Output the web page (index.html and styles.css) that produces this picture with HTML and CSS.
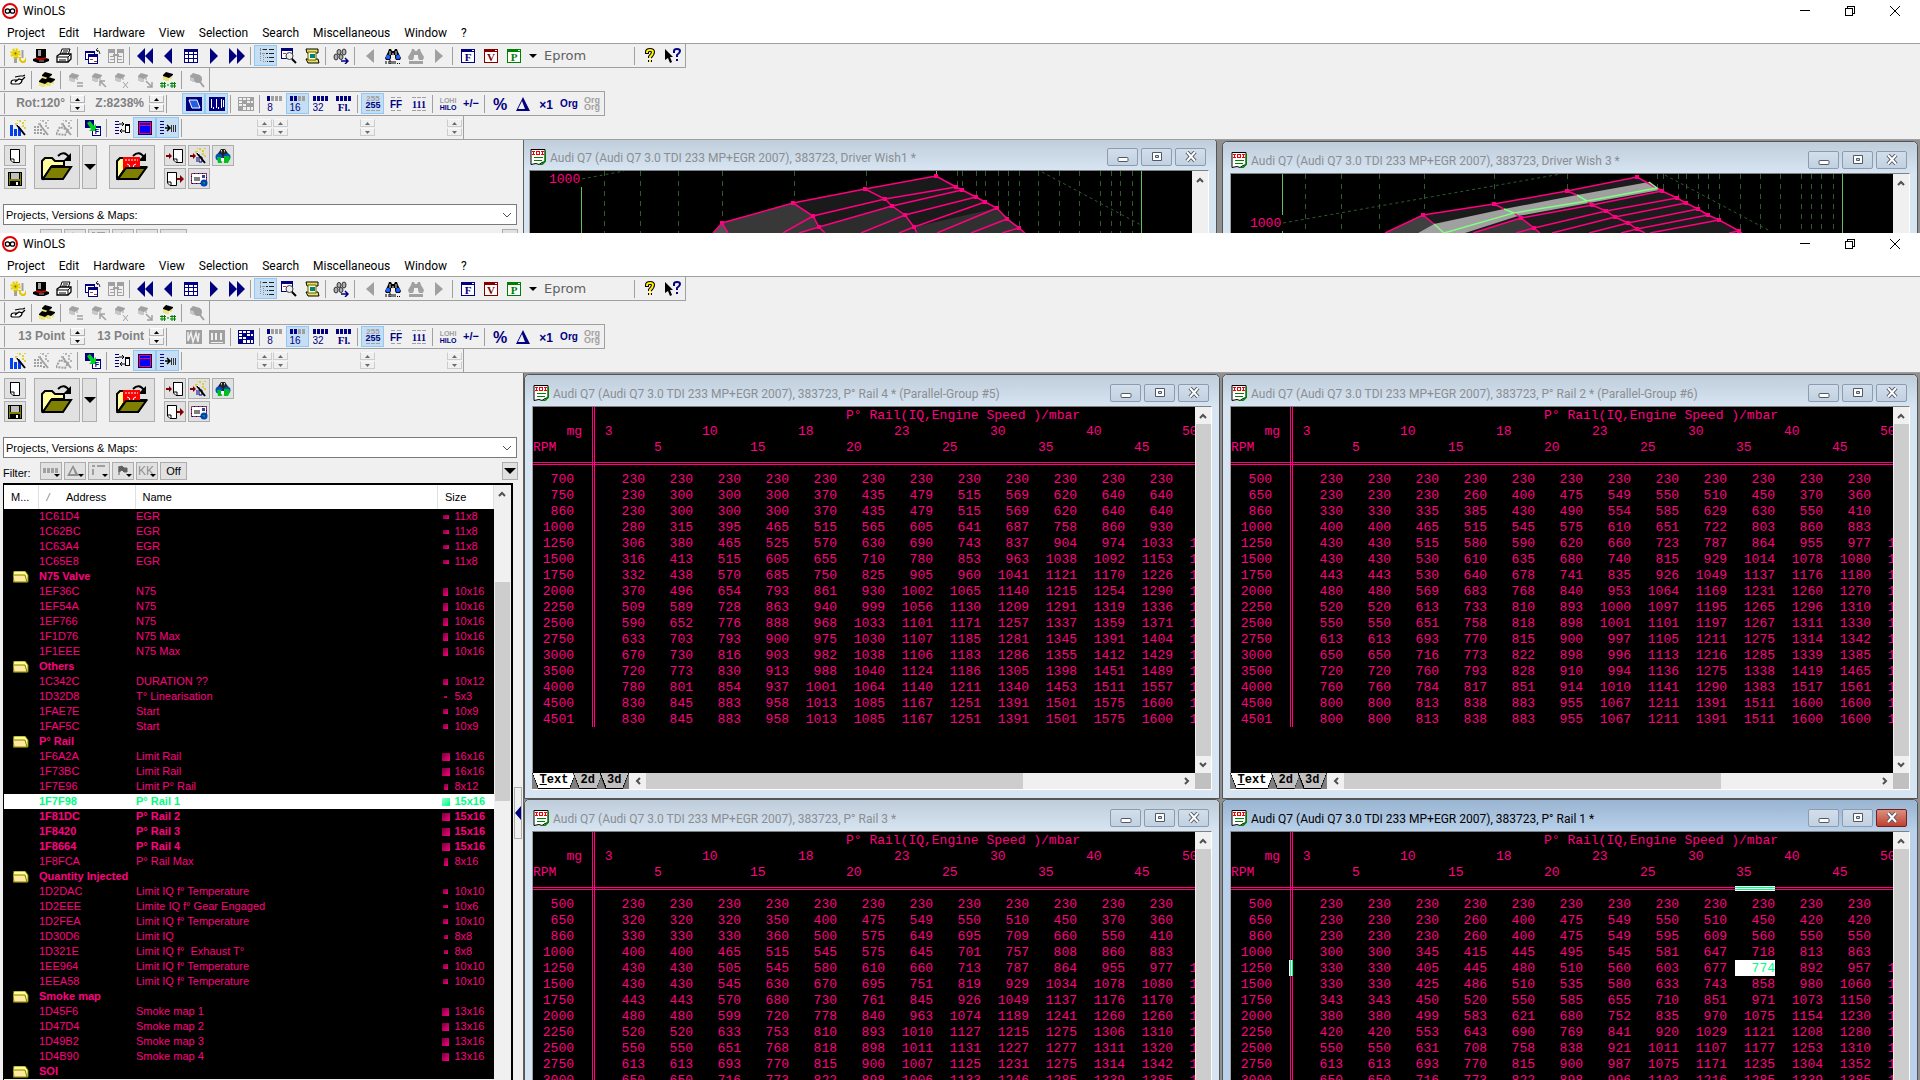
FILE: index.html
```html
<!DOCTYPE html>
<html lang="en">
<head>
<meta charset="utf-8">
<title>WinOLS</title>
<link rel="stylesheet" href="styles.css">
</head>
<body>
<main class="desktop">
  <section class="app app-back" data-app="back">
    <div class="chrome"></div>
    <div class="workspace">
      <aside class="side"></aside>
      <div class="splitter"></div>
      <div class="mdi"></div>
    </div>
  </section>
  <section class="app app-front" data-app="front">
    <div class="chrome"></div>
    <div class="workspace">
      <aside class="side"></aside>
      <div class="splitter"><button class="collapse" aria-label="Collapse"><svg width="6" height="14" viewBox="0 0 6 14"><path d="M6 0v14L0 7z" fill="#000080"/></svg></button></div>
      <div class="mdi"></div>
    </div>
  </section>
</main>
<script src="icons.js"></script>
<script src="app.js"></script>
</body>
</html>
```
FILE: styles.css
```css
* { box-sizing: border-box; }
body { margin: 0; background: #f0f0f0; color: #000; font-family: Roboto, "Noto Sans", sans-serif; font-size: 12px; }
button { margin: 0; padding: 0; border: 0; background: none; font: inherit; color: inherit; display: flex; align-items: center; justify-content: center; }
svg { display: block; flex: none; }
.desktop { height: 100vh; overflow: hidden; display: flex; flex-direction: column; }
.app { display: flex; flex-direction: column; overflow: hidden; background: #f0f0f0; }
.app-back { flex: 0 0 233px; }
.app-front { flex: 1; min-height: 0; }

/* title bar and menu */
.titlebar { display: flex; align-items: center; height: 22px; padding: 0 3px 0 2px; gap: 5px; background: #fff; }
.titlebar .name { flex: 1; }
.titlebar .controls { display: flex; }
.titlebar .controls button { width: 45px; height: 20px; }
.menu { display: flex; height: 21px; background: #fff; }
.menu button { padding: 0 7px; }

/* toolbars */
.bars { border-top: 1px solid #a0a0a0; border-bottom: 1px solid #a0a0a0; }
.bar { display: flex; align-items: center; width: fit-content; padding: 1px; border-right: 1px solid #a0a0a0; }
.bar.low { border-bottom: 1px solid #a0a0a0; }
.bar.high { border-top: 1px solid #a0a0a0; }
.grip { width: 4px; height: 21px; border-right: 1px solid #a0a0a0; margin-right: 1px; }
.tool { width: 23px; height: 21px; }
.tool.on { background: #c5def4; border: 1px solid #90c8f6; }
.tool.off svg { filter: brightness(0) invert(63%); }
.tool.slim { width: 15px; }
.sep { width: 1px; height: 18px; margin: 0 3px 0 2px; background: #a0a0a0; }
.sep.wide { margin-right: 15px; }
.readout { width: 59px; text-align: right; font: bold 12px/21px "Liberation Sans", Arial, sans-serif; color: #808080; }
.spin { display: flex; flex-direction: column; gap: 1px; margin-left: 5px; }
.spin button { width: 15px; height: 8px; border: 1px solid #b0b0b0; border-top-color: #fff; }
.spin.dim { margin-left: 1px; opacity: .55; }
.gap { width: 71px; }
.eprom { width: 92px; padding-left: 4px; font: 13px/21px "DejaVu Sans", sans-serif; color: #606060; }

/* side panel */
.workspace { flex: 1; min-height: 0; display: flex; }
.side { flex: 0 0 514px; display: flex; flex-direction: column; padding-top: 5px; font-family: "Liberation Sans", Arial, sans-serif; font-size: 11px; min-height: 0; }
.files { display: flex; padding-left: 4px; gap: 2px; }
.files button, .filter button { background: #e1e1e1; border: 1px solid #adadad; }
.stack { display: grid; grid-auto-rows: 21px; grid-template-columns: repeat(3, 22px); gap: 2px; margin-left: 7px; }
.stack.single { grid-template-columns: 22px; margin: 0 6px 0 0; }
.big { width: 46px; }
.files .drop { width: 15px; margin-right: 10px; }
.combo { position: relative; margin: 15px -3px 0 3px; }
.combo select { display: block; width: 100%; height: 21px; padding: 0 2px; appearance: none; border: 1px solid #7a7a7a; border-radius: 0; background: #fff; color: #000; font: 11px "Liberation Sans", Arial, sans-serif; }
.combo svg { position: absolute; right: 5px; top: 8px; pointer-events: none; }
.filter { display: flex; align-items: center; gap: 2px; margin: 4px -4px 0 3px; }
.filter .cap { width: 35px; padding-top: 4px; }
.filter button { width: 22px; height: 18px; }
.filter .off { width: 27px; }
.filter .more { width: 16px; margin-left: auto; }
.list { display: flex; margin: 3px 1px 0 3px; flex: 1; min-height: 0; overflow: hidden; border: 1px solid #000; border-width: 2px 2px 0 1px; }
.maps { width: 490px; flex: none; height: fit-content; }
.maps table { width: 490px; table-layout: fixed; border-collapse: collapse; background: #000; color: #ff0080; }
.maps th { height: 24px; padding: 0 0 0 7px; background: #fff; color: #000; font-weight: normal; text-align: left; border-right: 1px solid #e0e0e0; }
.maps td { height: 15px; padding: 0 0 0 1px; line-height: 15px; white-space: nowrap; }
.maps .mark { width: 34px; }
.maps .addr { width: 97px; }
.maps .size { width: 56px; }
.maps i { margin: 0 14px 0 1px; color: #808080; }
.maps .bold td { font-weight: bold; }
.maps .picked td { background: #fff; color: #00ff80; }
.maps td svg { margin-left: 8px; }
.dims { display: flex; align-items: center; gap: 4px; padding-left: 2px; }
.swatch { flex: 0 0 10px; display: flex; justify-content: center; }
.swatch b { background: linear-gradient(135deg, #700038, #ff0080); }
.picked .swatch b { background: linear-gradient(135deg, #90ffd0, #00ff80); }
.vscroll { width: 16px; flex: none; background: #f0f0f0; display: flex; flex-direction: column; align-items: center; }
.vscroll button { width: 16px; height: 17px; }
.vscroll .thumb { width: 15px; background: #cdcdcd; flex: 1; }
.list .thumb { flex: 0 0 219px; margin-top: 80px; }
.splitter { flex: 0 0 9px; }
.collapse { width: 8px; height: 52px; margin-top: 414px; border: 1px solid #adadad; }

/* document windows */
.mdi { flex: 1; min-width: 0; overflow: hidden; display: grid; grid-template-columns: 1fr 1fr; column-gap: 2px; align-content: start; padding: 1px 2px 0 0; border-left: 1px solid #606060; background: #909090; }
.win { min-width: 0; border: 1px solid #555; border-radius: 5px 5px 0 0; padding: 0 7px 8px; background: #d7e4f2; }
.win header { display: flex; align-items: center; height: 31px; margin: 0 -7px; padding: 4px 10px 0 8px; gap: 4px; color: #8a8e92; background: linear-gradient(#bfcddb, #d7e4f2); border-radius: 5px 5px 0 0; white-space: nowrap; }
.win h2 { flex: 1; margin: 0; padding-top: 2px; font-size: 12px; font-weight: normal; }
.win.active { background: #b9d1ea; }
.win.active header { color: #000; background: linear-gradient(#99b4d1, #b9d1ea); }
.win header button { width: 31px; height: 18px; margin-left: -1px; border: 1px solid #8c9cb0; border-radius: 2px; background: linear-gradient(#d2deea, #c2d0e0); }
.win.active header .close { background: linear-gradient(#dc9080, #c04030); border-color: #702020; }
.pane { display: flex; border: 1px solid #a0a0a0; border-color: #808080 #fff #fff #a0a0a0; border-bottom: 0; background: #000; }
.view { flex: 1; min-width: 0; min-height: 366px; overflow: hidden; background: #000; }
.app-back .view { min-height: 120px; }
.app-back .win:first-child { margin: -3px 3px 0 -3px; }
.sheet { width: 688px; table-layout: fixed; border-collapse: separate; border-spacing: 0; color: #ff0080; font: 13px/14px "Liberation Mono", "Courier New", monospace; }
.sheet td, .sheet th { height: 16px; padding: 2px 0 0; font-weight: normal; text-align: right; white-space: nowrap; }
.sheet .head { text-align: left; padding-left: 9px; }
.sheet .key { border-right: 3px double #ff0080; padding-right: 18px; }
.sheet .unit { padding-right: 10px; }
.sheet .left { text-align: left; }
.sheet .rules td, .sheet .rules .key { padding: 0; }
.sheet .c0 { width: 62px; }
.sheet .c1 { width: 50px; }
.rule { height: 3px; border-top: 1px solid #ff0080; border-bottom: 1px solid #ff0080; }
.key .rule { margin-right: -3px; }
.rule-hit { position: relative; top: -2px; height: 5px; margin-left: 8px; border: 1px solid #fff; border-width: 1px 0; background: linear-gradient(#00ff80 1px, #fff 1px 2px, #00ff80 2px); }
.sheet .key.hit { border-right-color: #00ff80; background: linear-gradient(to left, #fff 4px, transparent 4px) border-box; }
.hitcell { display: block; margin: -2px 0 0 8px; padding-top: 2px; background: #fff; color: #00ff80; }
.tabs { display: flex; height: 17px; border: 1px solid #fff; border-width: 0 1px 1px 0; background: #f0f0f0; }
.tabs .tabset { display: flex; background: #808080; width: 97px; }
.tabs .tabset button { position: relative; flex: 1; margin-left: -3px; height: 16px; clip-path: polygon(0 0, 100% 0, calc(100% - 6px) 100%, 6px 100%); background: #c0c0c0; font: bold 12px/15px "Liberation Mono", monospace; border-bottom: 1px solid #000; }
.tabs .tabset button::before, .tabs .tabset button::after { content: ""; position: absolute; top: 0; bottom: 0; width: 6px; background: linear-gradient(to top right, #000 55%, transparent 56%); left: 0; }
.tabs .tabset button::after { left: auto; right: 0; background: linear-gradient(to top left, #000 55%, transparent 56%); }
.tabs .tabset button:first-child { flex: 0 0 44px; margin: 0; background: #fff; }
.tabs .arrow { width: 17px; }
.tabs .bar-thumb { flex: 0 0 377px; background: #cdcdcd; }
.tabs .arrow.end { margin-left: auto; }
.tabs .corner { width: 16px; background: #c0c0c0; }
```
FILE: icons.js
```js
const N = '#000080';
const svg = (w, h, body) => `<svg width="${w}" height="${h}" viewBox="0 0 ${w} ${h}">${body}</svg>`;
const crisp = s => `<g shape-rendering="crispEdges">${s}</g>`;
const label = (t, x, y, size, color = N, font = 'Liberation Sans', weight = 'bold') =>
  `<text x="${x}" y="${y}" font-family="${font}" font-size="${size}" font-weight="${weight}" text-anchor="middle" fill="${color}">${t}</text>`;
const chip = (x, y) => `<path d="M${x + 1} ${y + 4}v4M${x + 3} ${y + 5}v4M${x + 5} ${y + 5}v4M${x + 8} ${y + 3}v4" stroke="#e8d800"/><path d="M${x} ${y + 3}l3-3 7 2 0 1-4 3-6-2z" fill="#000"/>`;
const bits = n => crisp([0, 1, 2, 3].map(i => `<path d="M${i * 4} 0h3v5h-3z" fill="${i < n ? N : '#a0a0a0'}"/>`).join(''));
const wand = `<path d="M7 5l8 10" stroke="#000" stroke-width="2"/><path d="M5 4h3M9 1h2M12 3h2M14 0h2M12 6h2M14 8h2M7 0h1" stroke="#d8c800" stroke-width="1.5"/><path d="M7 4l2 2" stroke="#fff"/>`;
const bino = c => `<path d="M0 10l3-6 1-3h2l1 2h2l1-2h2l1 3 3 6-1 2h-4l-1-2V7H6v3l-1 2H1z" fill="#000"/><circle cx="3" cy="9" r="2.200" fill="${c}"/><circle cx="13" cy="9" r="2.200" fill="${c}"/><path d="M5 3v4M11 3v4M8 5v3" stroke="#e0e0e0" fill="none"/>`;
const windowLetter = (l, c) => crisp(`<path d="M1.500 1.500h13v13h-13z" fill="#fff" stroke="${c}"/><path d="M1 1h14v3H1z" fill="${c}"/><path d="M12 2h2v1h-2z" fill="#fff"/>`) + label(l, 8, 13, 11, c, 'Liberation Serif');
const folder = `<path d="M1 26V9l3-3h7l3 3h9v5H11L2 27z" fill="#ffffa0" stroke="#000" stroke-width="2"/><path d="M2 27l8-12h20l-8 12z" fill="#808000" stroke="#000" stroke-width="2"/><path d="M17 4q6-6 11 1" fill="none" stroke="#000" stroke-width="2"/><path d="M30 1v8h-8z" fill="#000"/>`;
const page = '<path d="M3 1.500h9.500v13H6L3.500 12V1.500z" fill="#fff" stroke="#000"/><path d="M3 11h4v4" fill="none" stroke="#000"/>';
const I = {
  logo: svg(16, 16, '<circle cx="8" cy="8" r="7" fill="#fff" stroke="#e00000" stroke-width="2"/><circle cx="5.500" cy="8" r="2.200" fill="none" stroke="#000" stroke-width="1.300"/><circle cx="10.500" cy="8" r="2.200" fill="none" stroke="#000" stroke-width="1.300"/>'),
  doc: svg(16, 16, '<path d="M1 .5h14v12l-3 1-3 2-3-1-5 1z" fill="#fff" stroke="#000"/><path d="M15.500 2v10l-3 3-4 1" fill="none" stroke="#008000" stroke-width="1.500"/><path d="M4 8.500h9M4 11.500h8" stroke="#008000"/>' + crisp('<path d="M2 2h3v1h-1v2h1v1h-3v-1h1v-2h-1zM6 2h4v4h-4zM11 2h3v1h-1v2h1v1h-3v-1h1v-2h-1z" fill="#f00000"/><path d="M7 3h2v2h-2z" fill="#fff"/>')),
  gear: svg(16, 16, '<path d="M4 9h3v6H4z" fill="#a0a0a0"/><circle cx="5.500" cy="5.500" r="4" fill="none" stroke="#e8d000" stroke-width="2.500" stroke-dasharray="2 1.100"/><circle cx="5.500" cy="5.500" r="3" fill="#e8d000"/><circle cx="5.500" cy="5.500" r="1" fill="#706000"/><path d="M12.500 2v8" stroke="#a0a0a0" stroke-width="2"/><path d="M10 9v3l2 2h2l2-2v-2" fill="none" stroke="#e0c800" stroke-width="2"/>'),
  hat: svg(16, 16, '<path d="M3 1h10v9l3 1v2l-5 2H5l-5-2v-2l3-1z" fill="#000"/><path d="M5 2h3v6H5z" fill="#a0a0a0"/><path d="M3 9q5 2 10 0v2q-5 2-10 0z" fill="#c00000"/><path d="M6 13h5" stroke="#a0a0a0"/>'),
  print: svg(16, 16, '<path d="M4 7l2-6h8l-2 6z" fill="#fff" stroke="#000"/><path d="M1 8l3-2h11v5l-3 3H1z" fill="#fff" stroke="#000" stroke-width="1.300"/><path d="M1 9h11l3-3M3 12h7M7 3h5M6 5h5M12 9v5" stroke="#000" fill="none"/>'),
  wins: svg(16, 16, crisp(`<path d="M.5 3.500h9v8h-9z" fill="#fff" stroke="${N}"/><path d="M0 3h10v2H0z" fill="${N}"/><path d="M3.500 6.500h9v9h-9z" fill="#fff" stroke="${N}"/><path d="M3 6h10v3H3z" fill="${N}"/><path d="M5 11h3v1H5zM9 13h3v1H9z" fill="#a04040"/>`) + '<path d="M11 2q4 0 4 4M11 2l2-2M11 2l2 2" stroke="#303030" fill="none"/>'),
  split: svg(16, 16, crisp('<path d="M.5 2.500h6v12h-6zM9.500 2.500h6v12h-6z" fill="none" stroke="#a0a0a0"/><path d="M0 1h7v4H0zM9 1h7v4H9zM2 8h4v1H2zM2 11h4v1H2zM10 8h4v1h-4zM10 11h4v1h-4zM5 6h6v2H5z" fill="#a0a0a0"/>')),
  rew: svg(16, 16, `<path d="M8 0v16L0 8zM16 0v16L8 8z" fill="${N}"/>`),
  prev: svg(16, 16, `<path d="M12 0v16L4 8z" fill="${N}"/>`),
  next: svg(16, 16, `<path d="M4 0v16l8-8z" fill="${N}"/>`),
  fwd: svg(16, 16, `<path d="M0 0v16l8-8zM8 0v16l8-8z" fill="${N}"/>`),
  grid: svg(16, 16, crisp(`<path d="M1 1h14v14H1z" fill="${N}"/><path d="M2 4h3v2H2zM6 4h4v2H6zM11 4h3v2h-3zM2 7h3v3H2zM6 7h4v3H6zM11 7h3v3h-3zM2 11h3v3H2zM6 11h4v3H6zM11 11h3v3h-3z" fill="#fff"/>`)),
  tree: svg(16, 16, crisp('<path d="M2 0v13M2 5h5M5 5v10M5 9h3M5 13h3M2 1h3" stroke="#909090" stroke-dasharray="1 1"/><path d="M5 1h4v1H5zM11 1h5v1h-5zM8 5h2v1H8zM11 5h5v1h-5zM9 9h1v1H9zM11 9h5v1h-5zM9 13h1v1H9zM11 13h5v1h-5z" fill="#202020"/>')),
  find: svg(16, 16, crisp(`<path d="M.5.5h11v10h-11z" fill="#fff" stroke="${N}"/><path d="M0 0h12v3H0z" fill="${N}"/><path d="M2 5h3v1H2z" fill="#b04040"/>`) + '<circle cx="8.500" cy="8" r="3.500" fill="#eee" stroke="#404040"/><path d="M11 11l4 4" stroke="#000" stroke-width="2"/>'),
  scroll: svg(16, 16, '<path d="M2 1h12v4H3zM2 11h12l1 4H4z" fill="#e8e060" stroke="#000"/><path d="M4 4h8v8H4z" fill="#ffffc0" stroke="#606000"/><path d="M6 6h5v4H6z" fill="#008080"/>'),
  chain: svg(16, 16, `<g fill="#b0b0b0" stroke="#303030"><ellipse cx="3" cy="9" rx="2" ry="3"/><ellipse cx="6" cy="4" rx="2" ry="2.500"/><ellipse cx="8" cy="9" rx="2" ry="2.500"/><ellipse cx="11" cy="4" rx="2" ry="3"/></g><path d="M8 13h7M12 10l3 3-3 3" stroke="${N}" fill="none" stroke-width="1.500"/>`),
  prevg: svg(16, 16, '<path d="M12 1v14L4 8z" fill="#a0a0a0"/>'),
  nextg: svg(16, 16, '<path d="M4 1v14l8-7z" fill="#a0a0a0"/>'),
  bino: svg(16, 16, bino('#2060ff') + '<path d="M1 13v3M4 13h2v3H4zM8 13v3M10 13v3M12 15.500h1M14 15.500h1" stroke="#000" fill="none"/>'),
  bino2: svg(16, 16, '<path d="M0 9l3-5 1-3h2l1 2h2l1-2h2l1 3 3 5-1 3h-4l-1-3V7H6v2l-1 3H1z"/><path d="M1 13h14v3H1z"/>'),
  F: svg(16, 16, windowLetter('F', N)),
  V: svg(16, 16, windowLetter('V', '#800000')),
  P: svg(16, 16, windowLetter('P', '#008000')),
  caret: svg(8, 4, '<path d="M0 0h8L4 4z"/>'),
  caretBig: svg(12, 6, '<path d="M0 0h12L6 6z"/>'),
  help: svg(16, 16, '<path d="M5 6V4q0-2 3-2t3 2q0 2-3 5v1M8 12v2" fill="none" stroke="#000" stroke-width="4"/><path d="M5 5V4q0-2 3-2t3 2q0 2-3 5v1M8 12v2" fill="none" stroke="#ffee00" stroke-width="2"/>'),
  what: svg(16, 16, `<path d="M0 1l8 8H5l2 5-2 1-2-5-3 2z"/><path d="M9 5V3q0-2 3-2t3 2q0 2-3 4v2M12 11v2" fill="none" stroke="${N}" stroke-width="2"/>`),
  hand: svg(16, 16, '<path d="M5 5l5-1 3 0 2-1M1 11q0-3 3-3l3 0-2 2 4-3 3 1q0 3-3 4H3q-2 0-2-1zM12 8l3-3" fill="#fff" stroke="#000" stroke-width="1.200"/>'),
  chips: svg(16, 16, chip(3, 0) + chip(6, 5) + chip(0, 6)),
  chipEq: svg(16, 16, chip(1, 1) + '<path d="M9 11h6M9 14h6" stroke="#000" stroke-width="1.500"/>'),
  chipUp: svg(16, 16, chip(1, 1) + '<path d="M15 15L9 9M9 14V9h5" stroke="#000" stroke-width="1.500" fill="none"/>'),
  chipX: svg(16, 16, chip(1, 1) + '<path d="M9 10l5 6M14 10l-5 6" stroke="#000"/>'),
  chipDn: svg(16, 16, chip(1, 1) + '<path d="M9 9l6 6M15 10v5h-5" stroke="#000" stroke-width="1.500" fill="none"/>'),
  chipHash: svg(16, 16, chip(3, 0) + '<path d="M0 11.500h6M0 14h6M2 10v6M4.500 10v6M7 13h2M10 11.500h6M10 14h6M12 10v6M14.500 10v6" stroke="#008000"/>'),
  chipFind: svg(16, 16, chip(1, 1) + '<circle cx="9" cy="7" r="4"/><path d="M11 10l4 5" stroke="#000" stroke-width="2"/>'),
  v2: svg(16, 16, crisp(`<path d="M0 1h16v14H0z" fill="${N}"/>`) + '<path d="M3 4h8l3 8H6z" fill="#2060e0" stroke="#fff"/>'),
  v3: svg(16, 16, crisp(`<path d="M0 1h16v14H0z" fill="${N}"/><path d="M2.500 3v9M4.500 11v2M7.500 3v9M9.500 11v2M12.500 3v9M14.500 4v7" stroke="#fff"/>`)),
  v2g: svg(16, 16, crisp('<path d="M0 1h16v14H0z" fill="#a0a0a0"/>') + '<path d="M2 3v9l3-8 2 9 3-9 2 9 1-9" fill="none" stroke="#f0f0f0" stroke-width="1.500"/>'),
  v3g: svg(16, 16, crisp('<path d="M0 1h16v14H0z" fill="#a0a0a0"/><path d="M2 4h2v7H2zM6 4h2v7H6zM11 4h2v7h-2zM2 13h12v1H2z" fill="#f0f0f0"/>')),
  b8: svg(16, 16, bits(1) + label('8', 3, 15, 10, N, 'Liberation Sans', 'normal')), b16: svg(16, 16, bits(2) + label('16', 5, 15, 10, N, 'Liberation Sans', 'normal')),
  b32: svg(16, 16, bits(4) + label('32', 5, 15, 10, N, 'Liberation Sans', 'normal')), bfl: svg(16, 16, bits(4) + label('Fl.', 8, 15, 11, N, 'Liberation Serif')),
  n255: svg(16, 16, label('255', 8, 5, 8, '#a0a0a0') + label('255', 8, 12, 9) + crisp('<path d="M1 14h4M6 14h4M11 14h4" stroke="#a0a0a0"/>')),
  nff: svg(16, 16, crisp('<path d="M3 1.500h4M9 1.500h4M3 14.500h4M9 14.500h4" stroke="#a0a0a0"/>') + label('FF', 8, 12, 10)),
  n111: svg(16, 16, crisp('<path d="M1 1.500h4M6 1.500h4M11 1.500h4M1 14.500h4M6 14.500h4M11 14.500h4" stroke="#a0a0a0"/>') + label('111', 8, 12, 10, N, 'Liberation Serif')),
  hilo: svg(18, 16, label('LOHI', 9, 7, 7, '#a0a0a0') + label('HILO', 9, 14, 7)),
  pm: svg(16, 16, label('+/−', 8, 11, 11)),
  pct: svg(16, 16, label('%', 8, 14, 16)),
  delta: svg(16, 16, `<path d="M8 1l7 14H1zM7 5l-4 8h7z" fill="${N}" fill-rule="evenodd"/>`),
  x1: svg(16, 16, label('×1', 8, 13, 12)),
  org: svg(18, 16, label('Org', 9, 11, 10)),
  orgorg: svg(18, 18, label('Org', 9, 8, 9, '#a0a0a0') + label('Org', 9, 15, 9, '#a0a0a0')),
  grid3: svg(16, 16, crisp(`<path d="M0 1h16v14H0z" fill="${N}"/><path d="M1 2h3v2H1zM5 2h3v2H5zM9 2h3v2H9zM1 5h3v2H1zM9 5h3v2H9zM13 5h2v2h-2zM1 8h3v2H1zM5 8h3v2H5zM5 11h3v3H5zM9 11h3v3H9zM13 11h2v3h-2z" fill="#fff"/>`)),
  grid3g: svg(16, 16, crisp('<path d="M0 1h16v14H0z" fill="#a0a0a0"/><path d="M1 2h3v2H1zM5 2h3v2H5zM9 2h3v2H9zM1 5h3v2H1zM9 5h3v2H9zM13 5h2v2h-2zM1 8h3v2H1zM5 8h3v2H5zM5 11h3v3H5zM9 11h3v3H9zM13 11h2v3h-2z" fill="#f0f0f0"/>')),
  wbars: svg(16, 16, crisp('<path d="M0 5h3v11H0zM4 9h3v7H4zM8 8h3v8H8z" fill="#0040f0"/>') + wand),
  wgrid: svg(16, 16, crisp('<path d="M1 6h2v2H1zM4 6h2v2H4zM1 9h2v2H1zM4 9h2v2H4zM7 9h2v2H7zM1 12h2v2H1zM4 12h2v2H4zM7 12h2v2H7zM10 13h2v2h-2z"/>') + wand),
  wplane: svg(16, 16, '<path d="M0 14l4-7 8 3-3 5z" fill="none" stroke="#000" stroke-width="2" stroke-dasharray="2 1"/>' + wand),
  conv: svg(16, 16, crisp(`<path d="M0 0h9v8H0z" fill="${N}"/><path d="M7.500 6.500h8v9h-8z" fill="#fff" stroke="${N}"/><path d="M7 6h9v2H7z" fill="${N}"/>`) + '<path d="M2 3l3-2 4 5 2-2v7H4l2-2z" fill="#00d020"/>' + label('F', 12, 14, 7)),
  sync: svg(16, 16, crisp(`<path d="M1 1.500h4M1 4.500h4M1 7.500h4M1 10.500h4M1 13.500h4" stroke="${N}"/><path d="M11.500 4.500h4v8h-4z" fill="#fff" stroke="#000"/><path d="M11 4h5v2h-5z"/>`) + '<path d="M5 4h5M8 2l2 2-2 2M11 11H6M8 9l-2 2 2 2" stroke="#000" fill="none"/>'),
  panel: svg(16, 16, crisp(`<path d="M1 1h14v14H1z" fill="${N}"/><path d="M2.500 2.500h11v11h-11z" fill="#0000ff" stroke="#ff0040"/><path d="M2 5h12v1H2z" fill="#ff0040"/>`)),
  merge: svg(16, 16, crisp(`<path d="M0 1.500h4M0 4.500h4M0 7.500h4M0 10.500h4M0 13.500h4" stroke="${N}"/><path d="M11.500 5v7M13.500 5v7M15.500 5v7" stroke="#303030"/>`) + '<path d="M5 8h4M7 5l3 3-3 3" stroke="#000" fill="none" stroke-width="1.500"/>'),
  page: svg(16, 16, page),
  save: svg(16, 16, crisp('<path d="M1 1h14v14H1z"/><path d="M2 2h1v12H2zM13 2h1v12h-1zM3 8h10v2H3z" fill="#808000"/><path d="M4 2h8v6H4z" fill="#c0c0c0"/><path d="M9 11h2v3H9z" fill="#fff"/>')),
  open: svg(32, 30, folder),
  open2: svg(32, 30, folder + '<path d="M7 5h17v12H9l-2 3z" fill="#ff0000"/><path d="M9 8h13" stroke="#fff" stroke-dasharray="2 1"/><path d="M11 12q3 0 3 4M20 12q-3 0-3 4" stroke="#fff" fill="none"/><path d="M2 27l8-11h20l-8 11z" fill="#808000" stroke="#000" stroke-width="2"/>'),
  inp: svg(18, 16, `<g transform="translate(4 0)">${page}</g><path d="M0 8h4" stroke="#800000" stroke-width="2"/><path d="M3 5l3 3-3 3z" fill="#800000"/>`),
  out: svg(18, 16, `<g transform="translate(-2 0)">${page}</g><path d="M11 8h4" stroke="#800000" stroke-width="2"/><path d="M14 4l4 4-4 4z" fill="#800000"/>`),
  wimp: svg(18, 16, `<path d="M0 8h4" stroke="#800000" stroke-width="2"/><path d="M3 5l3 3-3 3z" fill="#800000"/><path d="M7 9v5M9 9h3v5H9z" stroke="${N}" fill="none"/>` + wand),
  world: svg(16, 16, '<path d="M1 8l3-4 2-3h4l2 3 3 4-1 4H2z" fill="#202020"/><circle cx="4" cy="9" r="3.500" fill="#0050c0"/><circle cx="12" cy="9" r="3.500" fill="#0050c0"/><path d="M2 9h4l1 6H3zM9 8h5l1 3-2 4H9z" fill="#00c020"/><path d="M6 2h1v3M9 2h1v3M6 10h3v3H6z" fill="#fff"/>'),
  mail: svg(17, 16, '<path d="M.5 2.500h15v10H.5z" fill="#fff" stroke="#c02020" stroke-dasharray="2 2"/><path d="M.5 2.500h15v10H.5z" fill="none" stroke="#000080" stroke-dasharray="2 2" stroke-dashoffset="2"/><path d="M3 7h6M3 9h6" stroke="#000"/><path d="M11 4h3v3h-3z" fill="#404080"/><circle cx="13" cy="12" r="3.500" fill="#0040c0"/><path d="M11 11h3v3z" fill="#00a020"/>'),
  mini: svg(16, 12, `<path d="M1 0h11l3 4v7H0V4z" fill="#ffff90" stroke="#808000"/><path d="M0 4h12l2 7H1z" fill="#ffe8a0" stroke="#808000"/>`),
  f1: svg(18, 14, crisp('<path d="M1 4h3v5H1zM5 4h3v5H5zM9 4h3v5H9zM13 4h3v5h-3z" fill="#a0a0a0"/>') + '<path d="M12 10h6l-3 3z"/>'),
  f2: svg(18, 14, '<path d="M7 1l6 11H1zM7 4l-3 6h5z" fill="#909090" fill-rule="evenodd"/><path d="M12 10h6l-3 3z"/>'),
  f3: svg(18, 14, '<path d="M2 2h3M3 5v6M7 2h8" stroke="#a0a0a0" stroke-width="2"/><path d="M12 10h6l-3 3z"/>'),
  f4: svg(18, 14, '<path d="M5 2v9M5 3l3-1 2 2h3v4h-3L8 6 5 8z" fill="#606060" stroke="#606060"/><path d="M12 10h6l-3 3z"/>'),
  f5: svg(18, 14, label('KK', 8, 11, 12, '#909090', 'Liberation Sans', 'normal') + '<path d="M12 10h6l-3 3z"/>'),
  more: svg(12, 6, '<path d="M0 0h12L6 6z"/>'),
  chevron: svg(10, 6, '<path d="M1 1l4 4 4-4" fill="none" stroke="#505050"/>'),
  up: svg(5, 3, '<path d="M0 3h5L2.500 0z"/>'), dn: svg(5, 3, '<path d="M0 0h5L2.500 3z"/>'),
  sUp: svg(8, 6, '<path d="M1 5l3-3 3 3" fill="none" stroke="#505050" stroke-width="2"/>'),
  sDn: svg(8, 6, '<path d="M1 1l3 3 3-3" fill="none" stroke="#505050" stroke-width="2"/>'),
  sLt: svg(6, 8, '<path d="M5 1L2 4l3 3" fill="none" stroke="#505050" stroke-width="2"/>'),
  sRt: svg(6, 8, '<path d="M1 1l3 3-3 3" fill="none" stroke="#505050" stroke-width="2"/>'),
  tMin: svg(10, 10, crisp('<path d="M0 4h10v1H0z"/>')),
  tRes: svg(10, 10, crisp('<path d="M.5 2.500h7v7h-7zM2.500 2V.5h7v7H8" fill="none" stroke="#000"/>')),
  tCls: svg(10, 10, '<path d="M0 0l10 10M10 0L0 10" stroke="#000"/>'),
  wMin: svg(12, 12, '<rect x="1" y="6.500" width="10" height="4" rx="1" fill="#fff" stroke="#505868"/>'),
  wMax: svg(12, 12, '<path d="M1.500 1.500h9v8h-9zM4.500 4.500h3v2h-3z" fill="#fff" stroke="#505868" fill-rule="evenodd"/>'),
  wCls: svg(12, 12, '<path d="M2 1l8 9M10 1L2 10" stroke="#505868" stroke-width="4"/><path d="M2 1l8 9M10 1L2 10" stroke="#fff" stroke-width="2"/>')
};
```
FILE: app.js
```js
const PINK = '#ff0080';

// Toolbar notation: "*" marks a pressed tool, "-" a disabled one, "|" a separator.
const tools = spec => spec.split(' ').map(t => {
  if (t === '|') return '<span class="sep"></span>';
  const state = t[0] === '*' ? ' on' : t[0] === '-' ? ' off' : '';
  const key = state ? t.slice(1) : t;
  return `<button class="tool${state}" aria-label="${key}">${I[key]}</button>`;
}).join('');
const spin = dim => `<span class="spin${dim ? ' dim' : ''}"><button aria-label="Up">${I.up}</button><button aria-label="Down">${I.dn}</button></span>`;
const bar = (cls, body) => `<div class="bar ${cls}"><span class="grip"></span>${body}</div>`;

function chrome(o) {
  const menu = ['Project', 'Edit', 'Hardware', 'View', 'Selection', 'Search', 'Miscellaneous', 'Window', '?'];
  return `<div class="titlebar">${I.logo}<span class="name">WinOLS</span><span class="controls">
    <button aria-label="Minimize">${I.tMin}</button><button aria-label="Restore">${I.tRes}</button><button aria-label="Close">${I.tCls}</button></span></div>
  <nav class="menu">${menu.map(m => `<button>${m}</button>`).join('')}</nav>
  <div class="bars">
  ${bar('low', tools('gear hat print | wins split | rew prev grid next fwd | *tree find scroll | chain | prevg bino -bino2 nextg | F V P')
    + `<button class="tool slim" aria-label="Programs">${I.caret}</button><span class="eprom">Eprom</span>` + tools('| help what'))}
  ${bar('', tools('hand | chips | -chipEq -chipUp -chipX -chipDn chipHash | -chipFind'))}
  ${bar('high low', `<span class="readout">${o.a}</span>${spin()}<span class="readout">${o.b}</span>${spin()}<span class="sep wide"></span>`
    + tools(`${o.views} | ${o.grid} | b8 *b16 b32 bfl | *n255 nff n111 | hilo pm | pct delta x1 org orgorg`))}
  ${bar('', tools('wbars -wgrid -wplane | conv | sync *panel *merge |') + `<span class="gap"></span>${spin(1)}${spin(1)}<span class="gap"></span>${spin(1)}<span class="gap"></span>${spin(1)}`)}
  </div>`;
}

const btn = (k, c = '') => `<button class="${c}" aria-label="${k}">${I[k]}</button>`;
const sideTools = (id, cap, off) => `<div class="files">
  <div class="stack single">${btn('page')}${btn('save')}</div>${btn('open', 'big')}${btn('caretBig', 'drop')}${btn('open2', 'big')}
  <div class="stack">${btn('inp')}${btn('wimp')}${btn('world')}${btn('out')}${btn('mail')}</div></div>
  <div class="combo"><select id="${id}" aria-label="Tree"><option>Projects, Versions &amp; Maps:</option></select>${I.chevron}</div>
  <div class="filter"><span class="cap">${cap}</span>${btn('f1')}${btn('f2')}${btn('f3')}${btn('f4')}${cap ? btn('f5') : '<button></button>'}<button class="off">${off}</button>${btn('more', 'more')}</div>`;

const maps = `1C61D4|EGR|11x8
1C62BC|EGR|11x8
1C63A4|EGR|11x8
1C65E8|EGR|11x8
N75 Valve
1EF36C|N75|10x16
1EF54A|N75|10x16
1EF766|N75|10x16
1F1D76|N75 Max|10x16
1F1EEE|N75 Max|10x16
Others
1C342C|DURATION ??|10x12
1D32D8|T° Linearisation|5x3
1FAE7E|Start|10x9
1FAF5C|Start|10x9
P° Rail
1F6A2A|Limit Rail|16x16
1F73BC|Limit Rail|16x16
1F7E96|Limit P° Rail|8x12
1F7F98|P° Rail 1|15x16|picked bold
1F81DC|P° Rail 2|15x16|bold
1F8420|P° Rail 3|15x16|bold
1F8664|P° Rail 4|15x16|bold
1F8FCA|P° Rail Max|8x16
Quantity Injected
1D2DAC|Limit IQ f° Temperature|10x10
1D2EEE|Limite IQ f° Gear Engaged|10x6
1D2FEA|Limit IQ f° Temperature|10x10
1D30D6|Limit IQ|8x8
1D321E|Limit IQ f°&nbsp; Exhaust T°|8x8
1EE964|Limit IQ f° Temperature|10x10
1EEA58|Limit IQ f° Temperature|10x10
Smoke map
1D45F6|Smoke map 1|13x16
1D47D4|Smoke map 2|13x16
1D49B2|Smoke map 3|13x16
1D4B90|Smoke map 4|13x16
SOI`.split('\n').map(line => {
  const [addr, name, size, cls = ''] = line.split('|');
  if (!name) return `<tr class="bold"><td>${I.mini}</td><td colspan="3">${addr}</td></tr>`;
  const [w, h] = size.split('x').map(n => Math.round(n / 2));
  return `<tr class="${cls}"><td></td><td>${addr}</td><td>${name}</td><td><div class="dims"><span class="swatch"><b style="width:${w}px;height:${h}px"></b></span>${size}</div></td></tr>`;
}).join('');
const list = `<div class="list"><div class="maps"><table><thead><tr><th class="mark">M...</th><th class="addr"><i>/</i> Address</th><th>Name</th><th class="size">Size</th></tr></thead><tbody>${maps}</tbody></table></div>
  <div class="vscroll"><button aria-label="Up">${I.sUp}</button><span class="thumb"></span></div></div>`;

const rpm = [1000, 1250, 1500, 1750, 2000, 2250, 2500, 2750, 3000, 3500, 4000, 4500, 4501];
const iq = [3, 5, 10, 15, 18, 20, 23, 25, 30, 35, 40, 45, 50];
const sheets = {
  p4: [[700, 750, 860], `230 230 230 230 230 230 230 230 230 230 230 230
230 300 300 300 370 435 479 515 569 620 640 640
230 300 300 300 370 435 479 515 569 620 640 640
280 315 395 465 515 565 605 641 687 758 860 930
306 380 465 525 570 630 690 743 837 904 974 1033
316 413 515 605 655 710 780 853 963 1038 1092 1153
332 438 570 685 750 825 905 960 1041 1121 1170 1226
370 496 654 793 861 930 1002 1065 1140 1215 1254 1290
509 589 728 863 940 999 1056 1130 1209 1291 1319 1336
590 652 776 888 968 1033 1101 1171 1257 1337 1359 1371
633 703 793 900 975 1030 1107 1185 1281 1345 1391 1404
670 730 816 903 982 1038 1106 1183 1286 1355 1412 1429
720 773 830 913 988 1040 1124 1186 1305 1398 1451 1489
780 801 854 937 1001 1064 1140 1211 1340 1453 1511 1557
830 845 883 958 1013 1085 1167 1251 1391 1501 1575 1600
830 845 883 958 1013 1085 1167 1251 1391 1501 1575 1600`],
  p2: [[500, 650, 860], `230 230 230 230 230 230 230 230 230 230 230 230
230 230 230 260 400 475 549 550 510 450 370 360
330 330 335 385 430 490 554 585 629 630 550 410
400 400 465 515 545 575 610 651 722 803 860 883
430 430 515 580 590 620 660 723 787 864 955 977
430 430 530 610 635 680 740 815 929 1014 1078 1080
443 443 530 640 678 741 835 926 1049 1137 1176 1180
480 480 569 683 768 840 953 1064 1169 1231 1260 1270
520 520 613 733 810 893 1000 1097 1195 1265 1296 1310
550 550 651 758 818 898 1001 1101 1197 1267 1311 1330
613 613 693 770 815 900 997 1105 1211 1275 1314 1342
650 650 716 773 822 898 996 1113 1216 1285 1339 1385
720 720 760 793 828 910 994 1136 1275 1338 1419 1465
760 760 784 817 851 914 1010 1141 1290 1383 1517 1561
800 800 813 838 883 955 1067 1211 1391 1511 1600 1600
800 800 813 838 883 955 1067 1211 1391 1511 1600 1600`],
  p3: [[500, 650, 860], `230 230 230 230 230 230 230 230 230 230 230 230
320 320 320 350 400 475 549 550 510 450 370 360
330 330 330 360 500 575 649 695 709 660 550 410
400 400 465 515 545 575 645 701 757 808 860 883
430 430 505 545 580 610 660 713 787 864 955 977
430 430 545 630 670 695 751 819 929 1034 1078 1080
443 443 570 680 730 761 845 926 1049 1137 1176 1170
480 480 599 720 778 840 963 1074 1189 1241 1260 1260
520 520 633 753 810 893 1010 1127 1215 1275 1306 1310
550 550 651 768 818 898 1011 1131 1227 1277 1311 1320
613 613 693 770 815 900 1007 1125 1231 1275 1314 1342
650 650 716 773 822 898 1006 1133 1246 1285 1339 1385`],
  p1: [[500, 650, 860], `230 230 230 230 230 230 230 230 230 230 230 230
230 230 230 260 400 475 549 550 510 450 420 420
230 230 230 260 400 475 549 595 609 560 550 550
300 300 345 415 445 495 545 581 647 718 813 863
330 330 405 445 480 510 560 603 677 774 892 957
330 330 425 486 510 535 580 633 743 858 980 1060
343 343 450 520 550 585 655 710 851 971 1073 1150
380 380 499 583 621 680 752 835 970 1075 1154 1230
420 420 553 643 690 769 841 920 1029 1121 1208 1280
550 550 631 708 758 838 921 1011 1107 1177 1253 1310
613 613 693 770 815 900 987 1075 1171 1235 1304 1352
650 650 716 773 822 898 996 1103 1216 1285 1339 1385`]
};

function sheet(id, pick) {
  const [first, text] = sheets[id];
  const speeds = first.concat(rpm);
  const heads = odd => iq.map((v, i) => `<th class="head">${i % 2 === odd ? (i ? v : `&#8202;${v}`) : ''}</th>`).join('');
  const rows = text.split('\n').map((line, r) => {
    const vals = line.split(' ');
    vals.push(r > 3 ? Math.max(1000, vals[11]) : vals[11]);
    const cells = vals.map((v, c) => `<td>${pick && pick.r === r && pick.c === c ? `<span class="hitcell">${v}</span>` : v}</td>`).join('');
    return `<tr><th class="key${pick && pick.r === r ? ' hit' : ''}">${speeds[r]}</th>${cells}</tr>`;
  }).join('');
  const rule = iq.map((v, c) => `<td><div class="rule">${pick && pick.c === c ? '<div class="rule-hit"></div>' : ''}</div></td>`).join('');
  return `<table class="sheet"><colgroup><col class="c0"><col class="c1"></colgroup>
    <tr><th class="key"></th><th></th><th></th><th></th><th></th><th></th><th class="head" colspan="8">P° Rail(IQ,Engine Speed )/mbar</th></tr>
    <tr><th class="key unit">mg</th>${heads(0)}</tr><tr><th class="key left">RPM</th>${heads(1)}</tr>
    <tr class="rules"><th class="key"><div class="rule"></div></th>${rule}</tr>${rows}</table>`;
}

// Surface plots: polylines in pane coordinates.
const line = (p, c = PINK) => `<polyline points="${p}" fill="none" stroke="${c}" stroke-width="1.500"/>`;
const dots = p => p.split(' ').map(q => { const [x, y] = q.split(','); return `<rect x="${x - 2}" y="${y - 2}" width="4" height="4" fill="${PINK}"/>`; }).join('');
const guides = xs => xs.map(x => `<path d="M${x + .5} 0V120" stroke="#2e5a2e" stroke-dasharray="5 5"/>`).join('');
const axis = d => `<path d="${d}" stroke="#60c060" fill="none"/>`;
const diag = d => `<path d="${d}" stroke="#2e5a2e" stroke-dasharray="3 3" fill="none"/>`;
const scale = y => `<text x="19" y="${y}" font-family="Liberation Mono" font-size="13" fill="${PINK}">1000</text>`;
function plot(o) {
  return `<svg width="662" height="120" viewBox="0 0 662 120">${guides(o.guides)}${o.axes.map(axis).join('')}${o.diags.map(diag).join('')}
  ${o.faces.map(([p, f]) => `<polygon points="${p}" fill="${f}"/>`).join('')}${o.lines.map(p => line(p)).join('')}
  ${o.green ? line(o.green, '#80ff80') : ''}${o.dots.map(dots).join('')}${scale(o.label)}</svg>`;
}
const wish1 = plot({
  label: 12,
  guides: [74, 110, 148, 192, 264, 336, 427, 432, 446, 455, 468, 478, 489, 508, 529, 549, 570, 581, 590, 602],
  axes: ['M51.500 16V120', 'M611.500 0V120', 'M406.500 0V5'],
  diags: ['M52 8L94 0', 'M512 1L611 54'],
  faces: [['183,62 192,52 263,32 335,18 406,5 426,15 467,37 495,62', '#1a1a1a'], ['192,52 263,32 283,45 289,56 295,62 198,62', '#383838'],
    ['289,56 362,35 375,44 384,56 388,62 269,62', '#2c2c2c'], ['384,56 467,37 495,62 388,62', '#303030'], ['183,62 192,52 198,62', '#505050']],
  lines: ['183,62 192,52 263,32 335,18 406,5 426,16 432,19 446,26 455,31 467,37 477,48 489,57 495,62', '426,16 355,28 283,45 253,62', '432,19 362,35 289,56 269,62',
    '446,26 375,44 331,62', '455,31 384,56 369,62', '467,37 407,62', '477,48 441,62', '489,57 472,62', '192,52 198,62', '263,32 283,45 289,56 295,62', '335,18 355,28 362,35 375,44 384,56 387,62'],
  dots: ['192,52 263,32 335,18 406,5 426,16 432,19 446,26 455,31 467,37 477,48 489,57 355,28 283,45 362,35 289,56 375,44 384,56']
});
const wish3 = plot({
  label: 53,
  guides: [74, 110, 148, 193, 263, 336, 426, 432, 447, 455, 467, 477, 488, 509, 529, 549, 570, 580, 590, 602],
  axes: ['M51.500 0V41M51.500 57V120', 'M611.500 0V120'],
  diags: ['M52 49L330 0', 'M434 1L539 57'],
  faces: [['154,59 192,41 263,30 336,17 406,3 426,14 467,35 509,59', '#1c1c1c'], ['154,59 192,41 203,50 187,59', '#404040'], ['242,59 290,44 303,54 309,59', '#383838'],
    ['187,59 203,50 273,35 346,21 418,8 429,16 358,29 287,42 234,59', '#a0a0a0']],
  lines: ['154,59 192,41 263,30 336,17 406,3 431,17 446,24 455,29 467,35 477,41 488,46 508,57 511,59', '431,17 361,31 290,44 242,59', '446,24 375,37 303,54 285,59', '455,29 384,43 321,59',
    '467,35 397,49 358,59', '477,41 406,55 390,59', '488,46 419,59', '508,57 498,59', '192,41 203,50', '263,30 273,35', '336,17 346,21', '283,39 290,44 303,54 309,59', '356,27 361,31 375,37 384,43 397,49 406,55 414,59'],
  green: '418,8 426,14 356,27 346,21 356,27 283,39 273,35 283,39 213,59 203,50',
  dots: ['192,41 263,30 336,17 406,3 431,17 446,24 455,29 467,35 477,41 488,46 508,57 361,31 290,44 375,37 303,54 384,43 397,49 406,55']
});

function win(title, body, { active, tabs } = {}) {
  const name = `Audi Q7 (Audi Q7 3.0 TDI 233 MP+EGR 2007), 383723, ${title}`;
  return `<article class="win${active ? ' active' : ''}"><header>${I.doc}<h2>${name}</h2>
    <button aria-label="Minimize">${I.wMin}</button><button aria-label="Maximize">${I.wMax}</button><button class="close" aria-label="Close">${I.wCls}</button></header>
    <div class="pane"><div class="view">${body}</div><div class="vscroll"><button aria-label="Up">${I.sUp}</button>${tabs ? '<span class="thumb"></span>' : ''}${tabs ? `<button aria-label="Down">${I.sDn}</button>` : ''}</div></div>
    ${tabs ? `<div class="tabs"><div class="tabset"><button><u>T</u>ext</button><button>2d</button><button>3d</button></div>
    <button class="arrow" aria-label="Left">${I.sLt}</button><span class="bar-thumb"></span><button class="arrow end" aria-label="Right">${I.sRt}</button><span class="corner"></span></div>` : ''}</article>`;
}

const apps = {
  back: { bars: { a: 'Rot:120°', b: 'Z:8238%', views: '*v2 *v3', grid: 'grid3g' }, side: sideTools('tree-back', '', ''), docs: win('Driver Wish1 *', wish1) + win('Driver Wish 3 *', wish3) },
  front: {
    bars: { a: '13 Point', b: '13 Point', views: 'v2g v3g', grid: 'grid3' }, side: sideTools('tree-front', 'Filter:', 'Off') + list,
    docs: win('P° Rail 4 * (Parallel-Group #5)', sheet('p4'), { tabs: true }) + win('P° Rail 2 * (Parallel-Group #6)', sheet('p2'), { tabs: true })
      + win('P° Rail 3 *', sheet('p3'), { tabs: true }) + win('P° Rail 1 *', sheet('p1', { r: 4, c: 9 }), { tabs: true, active: true })
  }
};
document.querySelectorAll('.app').forEach(el => {
  const a = apps[el.dataset.app];
  el.querySelector('.chrome').innerHTML = chrome(a.bars);
  el.querySelector('.side').innerHTML = a.side;
  el.querySelector('.mdi').innerHTML = a.docs;
});
```
